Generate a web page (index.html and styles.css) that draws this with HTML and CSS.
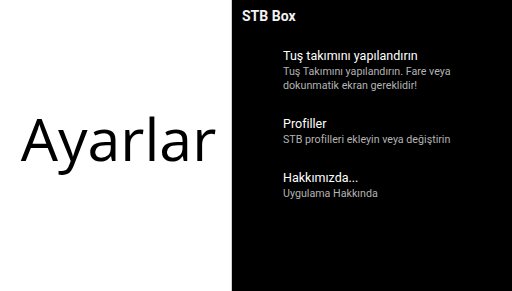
FILE: index.html
```html
<!DOCTYPE html>
<html lang="tr">
<head>
<meta charset="utf-8">
<title>Ayarlar</title>
<link rel="stylesheet" href="styles.css">
</head>
<body>
<div class="screen">
  <div class="splash">
    <div class="splash-title">Ayarlar</div>
  </div>
  <div class="panel">
    <div class="panel-header">STB Box</div>
    <ul class="prefs">
      <li class="pref">
        <div class="pref-title">Tuş takımını yapılandırın</div>
        <div class="pref-sub">Tuş Takımını yapılandırın. Fare veya<br>dokunmatik ekran gereklidir!</div>
      </li>
      <li class="pref">
        <div class="pref-title">Profiller</div>
        <div class="pref-sub">STB profilleri ekleyin veya değiştirin</div>
      </li>
      <li class="pref">
        <div class="pref-title">Hakkımızda...</div>
        <div class="pref-sub">Uygulama Hakkında</div>
      </li>
    </ul>
  </div>
</div>
</body>
</html>
```

FILE: styles.css
```css
html, body {
  margin: 0;
  padding: 0;
  background: #ffffff;
}
.screen {
  display: flex;
  width: 512px;
  height: 291px;
}
.splash {
  width: 232px;
  flex: none;
  display: flex;
  align-items: center;
  justify-content: center;
  padding: 0 0 14px 6px;
  box-sizing: border-box;
  background: #ffffff;
  border-right: 1px solid #d0d0d0;
}
.splash-title {
  font-family: "Open Sans", "DejaVu Sans", sans-serif;
  font-size: 59px;
  line-height: 1;
  color: #000000;
}
.panel {
  flex: 1;
  background: #000000;
  color: #ffffff;
  font-family: Roboto, "Noto Sans", sans-serif;
}
.panel-header {
  font-size: 14px;
  font-weight: 700;
  line-height: 20px;
  padding: 6px 10px 8px 10px;
  color: #f2f2f2;
}
.prefs {
  list-style: none;
  margin: 0;
  padding: 0;
}
.pref {
  padding: 14px 10px 9px 51px;
}
.pref-title {
  font-size: 12.5px;
  line-height: 16px;
  font-weight: 400;
  color: #ffffff;
}
.pref-sub {
  margin-top: 1px;
  font-size: 10.7px;
  line-height: 14px;
  color: #b3b3b3;
}
```
